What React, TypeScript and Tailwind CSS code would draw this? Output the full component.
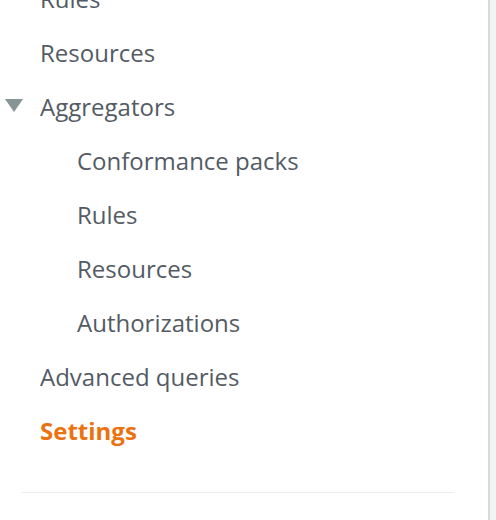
const items = [
  { label: "Rules", level: 0 },
  { label: "Resources", level: 0 },
  { label: "Aggregators", level: 0, expanded: true },
  { label: "Conformance packs", level: 1 },
  { label: "Rules", level: 1 },
  { label: "Resources", level: 1 },
  { label: "Authorizations", level: 1 },
  { label: "Advanced queries", level: 0 },
  { label: "Settings", level: 0, active: true },
];

export default function App() {
  return (
    <div className="flex h-[520px] w-[496px] overflow-hidden bg-[#f2f3f3] font-['Open_Sans',sans-serif]">
      <nav className="flex h-full w-[490px] flex-col border-r-2 border-[#d5dbdb] bg-white">
        <ul className="-mt-[28px] flex flex-col">
          {items.map((item, i) => (
            <li
              key={i}
              className={
                "relative flex h-[54px] items-center text-[24px] " +
                (item.level === 1 ? "pl-[77px] " : "pl-[40px] ") +
                (item.active ? "font-bold text-[#ec7211]" : "text-[#545b64]")
              }
            >
              {item.expanded && (
                <svg
                  className="absolute left-[5px] top-[19px]"
                  width="18"
                  height="14"
                  viewBox="0 0 18 14"
                >
                  <polygon points="0,0 18,0 9,13" fill="#879596" />
                </svg>
              )}
              {item.label}
            </li>
          ))}
        </ul>
        <div className="ml-[22px] mt-[34px] h-px w-[432px] bg-[#eaeded]" />
      </nav>
    </div>
  );
}
